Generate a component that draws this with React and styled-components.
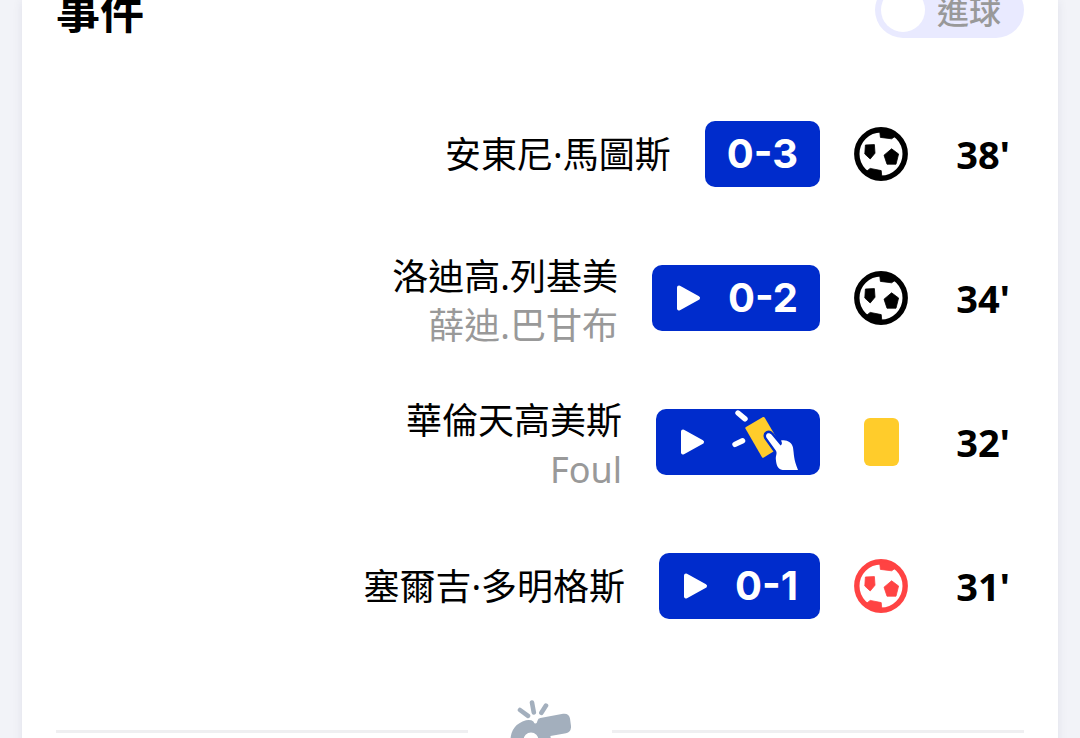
import React, { useState } from 'react';
import styled, { createGlobalStyle } from 'styled-components';

const GlobalStyle = createGlobalStyle`
  * {
    box-sizing: border-box;
  }

  html {
    scrollbar-width: none;
  }

  body {
    margin: 0;
    background-color: #f2f3f8;
    color: #000;
    font-family: 'Noto Sans', 'Noto Sans CJK TC', sans-serif;
  }
`;

const Page = styled.main`
  padding: 0 22px;
`;

const Card = styled.section`
  padding: 0 34px 40px;
  background-color: #fff;
  box-shadow: 0 0 10px rgba(30, 30, 80, 0.08);
  overflow: hidden;
`;

// The header is partly scrolled out of view
const Header = styled.header`
  display: flex;
  align-items: center;
  justify-content: space-between;
  margin-top: -18px;
  padding-bottom: 44px;
`;

const Title = styled.h2`
  margin: 0;
  font-family: 'Noto Sans CJK TC', sans-serif;
  font-size: 44px;
  line-height: 56px;
  font-weight: 700;
`;

const Toggle = styled.label`
  display: flex;
  align-items: center;
  gap: 12px;
  height: 56px;
  padding: 0 23px 0 6px;
  border-radius: 28px;
  background-color: #e9eaff;
  color: #999;
  font-size: 32px;
  font-weight: 500;
  cursor: pointer;
`;

const ToggleKnob = styled.input`
  appearance: none;
  width: 44px;
  height: 44px;
  margin: 0;
  border-radius: 50%;
  background-color: #fff;
  cursor: pointer;

  &:checked {
    background-color: #002ccc;
  }
`;

const EventList = styled.ul`
  margin: 0;
  padding: 0;
  list-style: none;
`;

const EventRow = styled.li`
  display: flex;
  align-items: center;
  justify-content: flex-end;
  height: 144px;
`;

const Players = styled.div`
  margin-right: 34px;
  padding-top: ${({ $stacked }) => ($stacked ? '6px' : '0')};
  text-align: right;
  font-size: 36px;
  line-height: 49px;
`;

const Player = styled.div``;

const Detail = styled.div`
  color: #999;
`;

const Badge = styled.div`
  display: flex;
  align-items: center;
  gap: 22px;
  height: 66px;
  padding: 0 22px;
  border: none;
  border-radius: 10px;
  background-color: #002ccc;
  color: #fff;
  font-family: Inter, sans-serif;
  font-size: 40px;
  font-weight: 700;
  line-height: 66px;
`;

const VideoBadge = styled(Badge).attrs({ as: 'button', type: 'button' })`
  cursor: pointer;
`;

const IconCell = styled.div`
  display: flex;
  justify-content: center;
  width: 122px;
`;

const YellowCard = styled.div`
  width: 35px;
  height: 48px;
  border-radius: 6px;
  background-color: #ffcc2b;
`;

const Time = styled.time`
  width: 82px;
  text-align: center;
  font-size: 38px;
  font-weight: 700;
`;

const Divider = styled.div`
  display: flex;
  align-items: center;
  gap: 41px;
  padding-top: 42px;
`;

const Line = styled.div`
  flex: 1;
  height: 3px;
  background-color: #efeff1;
`;

const PlayIcon = () => (
  <svg width="32" height="32" viewBox="0 0 32 32" aria-hidden="true">
    <path
      d="M5 5.5 L24 16 L5 26.5 Z"
      fill="#fff"
      stroke="#fff"
      strokeWidth="4"
      strokeLinejoin="round"
    />
  </svg>
);

const BallIcon = ({ color }) => (
  <svg width="54" height="54" viewBox="0 0 54 54" fill={color} aria-hidden="true">
    <circle cx="27" cy="27" r="24.2" fill="none" stroke={color} strokeWidth="5.4" />
    <g stroke={color} strokeWidth="0.8" strokeLinejoin="round">
      <path d="M37.6 21.8 L44.6 27 L42 37.2 L33 37.2 L30 28.2 Z" />
      <path d="M11.4 18 L20.4 17.6 L21 26.2 L16.2 32 L10.8 27 Z" />
      <path d="M25.6 3 L26.4 10.4 L37.6 11.8 L44 7.4 L36 3 Z" />
      <path d="M10 46.4 L16.2 41.4 L27.2 43.6 L28 51.6 L20 51 Z" />
    </g>
  </svg>
);

const ShowCardIcon = () => (
  <svg width="66" height="66" viewBox="0 0 66 66" aria-hidden="true">
    <path
      d="M6 4 L13 9.8 M3 35.4 L10.6 31.8"
      stroke="#fff"
      strokeWidth="5.4"
      strokeLinecap="round"
    />
    <path
      d="M14 18 L31 8 Q32 7.6 32.6 8.6 L49.6 37.4 L31.8 48.6 Q30.6 49.2 30 48.2 L13.4 19.6 Q13 18.6 14 18 Z"
      fill="#ffcc2b"
    />
    <path
      d="M34.4 28.4 C33 24.8 36.6 22.6 39.4 25.6 L48.6 36.4 C50.4 35.6 50.2 33.6 49 31.6 C54.4 30.2 60 33.4 61 38.6 C62.2 46 61.4 50 66 61 L50.6 61 C45.6 60 44.4 56.6 43.8 50 C43.6 46.6 45.6 44.4 43.8 41.6 Z"
      fill="#fff"
      stroke="#002ccc"
      strokeWidth="5"
      strokeLinejoin="round"
      paintOrder="stroke"
    />
  </svg>
);

const WhistleIcon = () => (
  <svg width="62" height="62" viewBox="0 0 62 62" aria-hidden="true">
    <path
      d="M11 10 L19 15.8 M23 2.6 L24.8 12.4 M37 5.6 L32.4 12.8"
      stroke="#a3afbd"
      strokeWidth="4.6"
      strokeLinecap="round"
    />
    <path
      d="M28.6 20.4 Q29 18.4 31.4 18 L54 13.8 Q60 13 61 18.6 L62 26 Q62.4 32 57 33.2 L41.4 36 Q44 48 36 55 Q27 62 16 58.4 Q3 53.6 1.4 40 Q2 24.6 17 20.2 Q22 19.4 24.4 21.4 Q25.4 23.8 26.6 23.6 Q28 23 28.6 20.4 Z M22 32.6 A7.6 7.6 0 1 0 22 47.8 A7.6 7.6 0 1 0 22 32.6 Z"
      fill="#a3afbd"
      fillRule="evenodd"
    />
  </svg>
);

const events = [
  { time: 38, type: 'goal', player: '安東尼·馬圖斯', score: '0-3' },
  { time: 34, type: 'goal', player: '洛迪高.列基美', detail: '薛迪.巴甘布', score: '0-2', video: true },
  { time: 32, type: 'yellow', player: '華倫天高美斯', detail: 'Foul', video: true },
  { time: 31, type: 'ownGoal', player: '塞爾吉·多明格斯', score: '0-1', video: true },
];

const EventIcon = ({ type }) => {
  if (type === 'yellow') {
    return <YellowCard />;
  }
  return <BallIcon color={type === 'ownGoal' ? '#ff4343' : '#000'} />;
};

const MatchEvent = ({ event }) => (
  <EventRow>
    <Players $stacked={Boolean(event.detail)}>
      <Player>{event.player}</Player>
      {event.detail && <Detail>{event.detail}</Detail>}
    </Players>
    {event.video ? (
      <VideoBadge aria-label={event.score ? undefined : 'Yellow card'}>
        <PlayIcon />
        {event.score || <ShowCardIcon />}
      </VideoBadge>
    ) : (
      <Badge>{event.score}</Badge>
    )}
    <IconCell>
      <EventIcon type={event.type} />
    </IconCell>
    <Time>{event.time}'</Time>
  </EventRow>
);

const App = () => {
  const [goalsOnly, setGoalsOnly] = useState(false);
  const shown = goalsOnly ? events.filter((e) => e.type !== 'yellow') : events;

  return (
    <>
      <GlobalStyle />
      <Page>
        <Card>
          <Header>
            <Title>事件</Title>
            <Toggle>
              <ToggleKnob
                type="checkbox"
                checked={goalsOnly}
                onChange={(e) => setGoalsOnly(e.target.checked)}
              />
              進球
            </Toggle>
          </Header>
          <EventList>
            {shown.map((event) => (
              <MatchEvent key={event.time} event={event} />
            ))}
          </EventList>
          <Divider>
            <Line />
            <WhistleIcon />
            <Line />
          </Divider>
        </Card>
      </Page>
    </>
  );
};

export default App;
